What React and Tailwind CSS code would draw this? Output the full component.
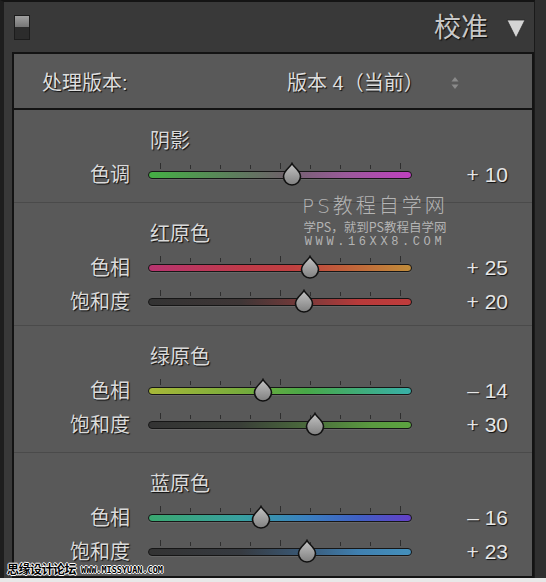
import React from 'react';

const sections = [
  {
    title: '阴影',
    h: 'h-[92px]',
    rows: [
      { label: '色调', value: 10, track: 'bg-[linear-gradient(to_right,#44b044,#5f7a5f_35%,#6c6468_50%,#9a5a9a_75%,#c040c0)]' },
    ],
  },
  {
    title: '红原色',
    h: 'h-[123px] border-t border-t-[#4a4a4a]',
    rows: [
      { label: '色相', value: 25, track: 'bg-[linear-gradient(to_right,#b83470,#c03a4a_35%,#c04040_55%,#c0603a_75%,#c08c3a)]' },
      { label: '饱和度', value: 20, track: 'bg-[linear-gradient(to_right,#333,#3e3636_35%,#7a3a3a_60%,#b83a3a_80%,#c03c3c)]' },
    ],
  },
  {
    title: '绿原色',
    h: 'h-[127px] border-t border-t-[#4a4a4a]',
    rows: [
      { label: '色相', value: -14, track: 'bg-[linear-gradient(to_right,#a8b838,#78ac3c_35%,#48a848_60%,#40ac78_80%,#38b0a8)]' },
      { label: '饱和度', value: 30, track: 'bg-[linear-gradient(to_right,#333,#3a3f38_35%,#4a6a3c_60%,#5a9a40_85%,#5ca440)]' },
    ],
  },
  {
    title: '蓝原色',
    h: 'flex-1 border-t border-t-[#4a4a4a]',
    rows: [
      { label: '色相', value: -16, track: 'bg-[linear-gradient(to_right,#3aa870,#38a0a0_35%,#3a80c0_60%,#4060c4_80%,#6440c8)]' },
      { label: '饱和度', value: 23, track: 'bg-[linear-gradient(to_right,#333,#363a40_35%,#3a5a78_60%,#4080b0_80%,#4490bc)]' },
    ],
  },
];

const ticks = [12, 42, 72, 102, 132, 162, 192, 222, 252];

const shadow = '[text-shadow:1px_1px_1px_rgba(0,0,0,0.85)]';

const Thumb = ({ left }) => (
  <svg
    width="20"
    height="24"
    viewBox="0 0 20 24"
    className="absolute top-1/2 -translate-y-[13px]"
    style={{ left: left - 10 }}
  >
    <defs>
      <linearGradient id="thumbfill" x1="0" y1="0" x2="0" y2="1">
        <stop offset="0" stopColor="#c4c4c4" />
        <stop offset="1" stopColor="#808080" />
      </linearGradient>
    </defs>
    <path
      d="M10 1.5 C11.5 5 18.5 8.5 18.5 14.5 A8.5 8.5 0 0 1 1.5 14.5 C1.5 8.5 8.5 5 10 1.5 Z"
      fill="url(#thumbfill)"
      stroke="#111"
      strokeWidth="1.6"
    />
  </svg>
);

const Slider = ({ value, track }) => (
  <div className="relative w-[264px] h-full">
    {ticks.map((t, i) => (
      <div
        key={t}
        className={`absolute w-px bg-[#2e2e2e] ${i === 0 || i === 4 || i === 8 ? 'h-[6px] top-[5px]' : 'h-[4px] top-[7px]'}`}
        style={{ left: t }}
      />
    ))}
    <div className={`absolute left-0 right-0 top-1/2 -translate-y-1/2 h-[8px] rounded-full border-[1.5px] border-[#161616] shadow-[0_1px_0_rgba(255,255,255,0.08)] ${track}`} />
    <Thumb left={132 + value * 1.18} />
  </div>
);

const fmt = v => (v < 0 ? `– ${Math.abs(v)}` : `+ ${v}`);

export default function App() {
  return (
    <div className="relative w-[546px] h-[582px] bg-[#2e2e2e] flex flex-col overflow-hidden font-['Liberation_Sans','Noto_Sans_CJK_SC',sans-serif]">
      <div className="h-[578px] flex">
        <div className="w-[535px] flex flex-col bg-[#393939] border-t-2 border-t-[#141414] border-l-[4px] border-l-[#1e1e1e] border-r border-r-[#1a1a1a]">
          {/* header */}
          <div className="h-[50px] flex items-center pl-[10px] pr-[8px]">
            <div className="w-[16px] h-[25px] flex flex-col border border-[#1c1c1c]">
              <div className="h-[11px] bg-[linear-gradient(#a0a0a0,#767676)]" />
              <div className="flex-1 bg-[#2c2c2c]" />
            </div>
            <div className={`ml-auto mt-[2px] text-[27px] text-[#c8c8c8] leading-none ${shadow}`}>校准</div>
            <svg width="20" height="20" viewBox="0 0 20 20" className="ml-[18px] mt-[3px]">
              <path d="M1 1 H19 L10 19 Z" fill="#d4d4d4" stroke="#2a2a2a" strokeWidth="0.8" />
            </svg>
          </div>

          {/* panel */}
          <div className="ml-[8px] flex-1 flex flex-col bg-[#595959] border-2 border-[#131313]">
            <div className="h-[56px] pt-[3px] flex items-center border-b-2 border-b-[#131313] text-[20px] text-[#dedede]">
              <div className={`w-[273px] pl-[28px] ${shadow}`}>处理版本:</div>
              <div className={shadow}>版本 4（当前）</div>
              <svg width="8" height="14" viewBox="0 0 8 14" className="ml-[27px]">
                <path d="M4 1 L7.5 5.5 H0.5 Z" fill="#8a8a8a" />
                <path d="M4 13 L7.5 8.5 H0.5 Z" fill="#8a8a8a" />
              </svg>
            </div>

            {sections.map(s => (
              <div key={s.title} className={`${s.h} flex flex-col pt-[19px]`}>
                <div className={`h-[24px] leading-[24px] pl-[136px] text-[20px] text-[#dadada] ${shadow}`}>{s.title}</div>
                <div className="mt-[5px] flex flex-col">
                  {s.rows.map(r => (
                    <div key={r.label} className="h-[34px] flex items-center">
                      <div className={`w-[116px] text-right text-[20px] text-[#dadada] ${shadow}`}>{r.label}</div>
                      <div className="ml-[18px] h-full">
                        <Slider value={r.value} track={r.track} />
                      </div>
                      <div className={`w-[96px] text-right text-[21px] text-[#e6e6e6] ${shadow}`}>{fmt(r.value)}</div>
                    </div>
                  ))}
                </div>
              </div>
            ))}
          </div>
        </div>
        <div className="flex-1 bg-[#2f2f2f]" />
      </div>
      <div className="flex-1 bg-[#e8e8e8]" />

      {/* watermarks */}
      <div className="absolute left-[297px] top-[195px] w-[156px] flex flex-col items-center text-[#b4b4b4]">
        <div className="text-[20px] leading-[22px] tracking-[3px] font-['DejaVu_Sans','Noto_Sans_CJK_SC',sans-serif] font-light">PS教程自学网</div>
        <div className="mt-[3px] text-[12.5px] leading-[14px] font-['Noto_Sans_CJK_SC',sans-serif]">学PS，就到PS教程自学网</div>
        <div className="mt-[1px] text-[12px] leading-[14px] tracking-[3.6px] font-['Liberation_Mono',monospace]">WWW.16XX8.COM</div>
      </div>
      <div className="absolute left-[7px] top-[562px] flex items-end text-black [text-shadow:1px_0_0_#fff,-1px_0_0_#fff,0_1px_0_#fff,0_-1px_0_#fff]">
        <span className="text-[12px] leading-[14px] font-bold tracking-[-0.5px] font-['Noto_Sans_CJK_SC',sans-serif]">思缘设计论坛</span>
        <span className="ml-[5px] text-[8.5px] leading-[11px] font-bold font-['DejaVu_Sans_Mono',monospace]">WWW.MISSYUAN.COM</span>
      </div>
    </div>
  );
}
